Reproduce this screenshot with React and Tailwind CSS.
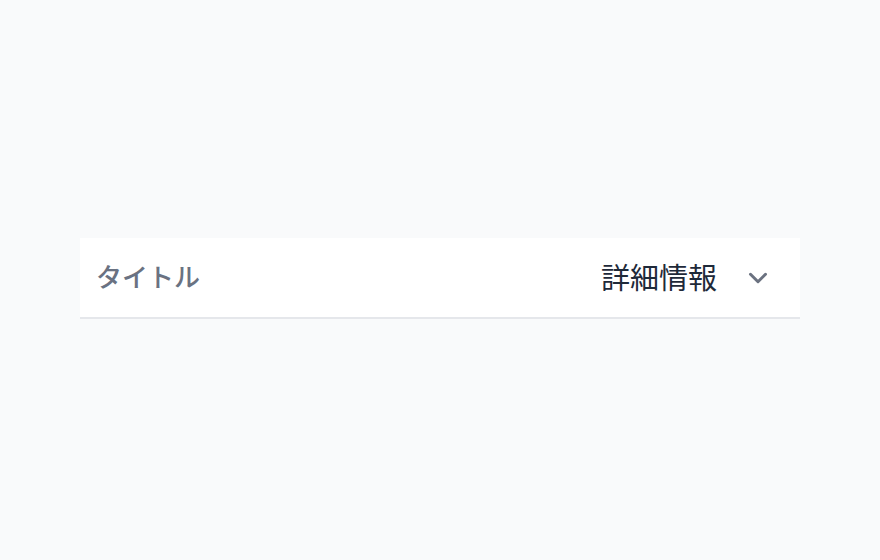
import React from 'react';

export default function App() {
  return (
    <div className="min-h-screen bg-gray-50 flex items-center justify-center" style={{ fontFamily: '"Noto Sans", "Noto Sans CJK JP", sans-serif' }}>
      <div className="w-[720px] h-[81px] mb-[3px] bg-white border-b-2 border-gray-200 flex items-center justify-between pl-4 pr-[27px]">
        <h2 className="text-[26px] font-medium text-gray-500">タイトル</h2>
        <button className="flex items-center gap-[26px] text-gray-800">
          <span className="text-[29px]">詳細情報</span>
          <svg width="30" height="30" viewBox="0 0 24 24" fill="none" stroke="#6b7280" strokeWidth="2.4" strokeLinecap="round" strokeLinejoin="round">
            <path d="M6 9l6 6 6-6" />
          </svg>
        </button>
      </div>
    </div>
  );
}
